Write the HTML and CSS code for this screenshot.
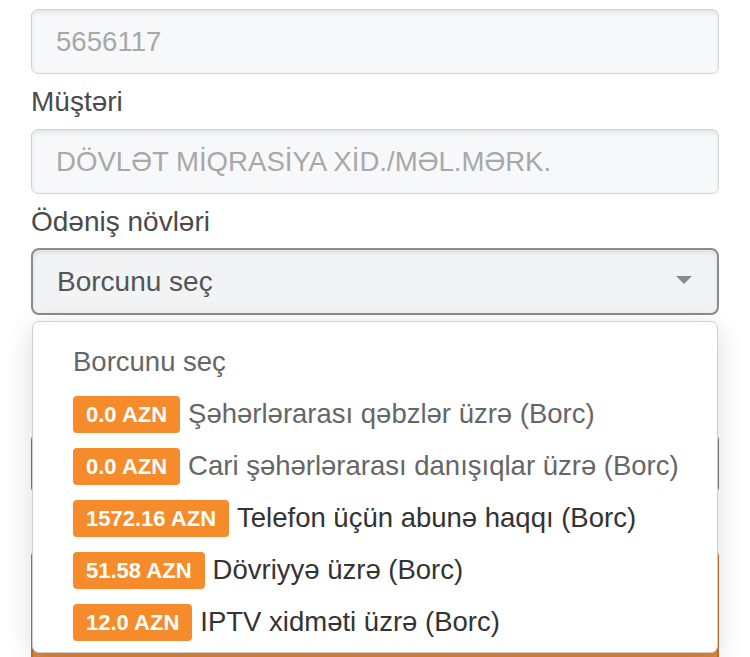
FILE: index.html
```html
<!DOCTYPE html>
<html lang="az">
<head>
<meta charset="UTF-8">
<meta name="viewport" content="width=device-width, initial-scale=1.0">
<title>Mobil ödəniş</title>
<link rel="stylesheet" href="styles.css">
</head>
<body>

<form class="pay-form">
    <input class="field" type="text" value="5656117" readonly>

    <label class="label">Müştəri</label>
    <input class="field" type="text" value="DÖVLƏT MİQRASİYA XİD./MƏL.MƏRK." readonly>

    <label class="label label-select">Ödəniş növləri</label>
    <div class="select-wrap">
        <div class="select">
            <span>Borcunu seç</span>
            <span class="caret"></span>
        </div>

        <ul class="dropdown">
            <li class="option placeholder">Borcunu seç</li>
            <li class="option muted"><span class="badge">0.0 AZN</span>Şəhərlərarası qəbzlər üzrə (Borc)</li>
            <li class="option muted"><span class="badge">0.0 AZN</span>Cari şəhərlərarası danışıqlar üzrə (Borc)</li>
            <li class="option"><span class="badge">1572.16 AZN</span>Telefon üçün abunə haqqı (Borc)</li>
            <li class="option"><span class="badge">51.58 AZN</span>Dövriyyə üzrə (Borc)</li>
            <li class="option"><span class="badge">12.0 AZN</span>IPTV xidməti üzrə (Borc)</li>
        </ul>
    </div>

    <label class="label label-amount">Məbləğ</label>
    <input class="field field-amount" type="text">

    <button class="pay-btn" type="button">MOBİL ÖDƏ</button>
</form>

</body>
</html>
```

FILE: styles.css
```css
body {
    margin: 0;
    background: #fff;
    font-family: 'Liberation Sans', Arial, sans-serif;
    color: #4a4a4a;
}

.pay-form {
    padding: 9px 31px 0;
}

.field {
    display: block;
    box-sizing: border-box;
    width: 100%;
    height: 65px;
    margin: 0;
    padding: 0 24px;
    border: 1px solid #d2d2d4;
    border-radius: 7px;
    background: #f7f8fa;
    box-shadow: inset 0 3px 4px rgba(0, 0, 0, 0.07);
    font-family: inherit;
    font-size: 27.6px;
    color: #a8a8a8;
    outline: none;
}

.label {
    display: block;
    height: 30px;
    line-height: 30px;
    margin: 13px 0 12px;
    font-size: 28px;
    color: #4a4a4a;
}

.label-select {
    margin-bottom: 11px;
}

.select-wrap {
    position: relative;
}

.select {
    box-sizing: border-box;
    height: 67px;
    padding: 0 25px 0 24px;
    display: flex;
    align-items: center;
    justify-content: space-between;
    border: 2px solid #8c8c8c;
    border-radius: 8px;
    background: #f2f3f5;
    box-shadow: inset 0 3px 5px rgba(0, 0, 0, 0.08);
    font-size: 28px;
    color: #555;
}

.caret {
    width: 0;
    height: 0;
    margin-top: -4px;
    border-left: 8px solid transparent;
    border-right: 8px solid transparent;
    border-top: 8px solid #8a8a8a;
}

.dropdown {
    position: absolute;
    top: 73px;
    left: 1px;
    right: 1px;
    z-index: 5;
    margin: 0;
    padding: 14px 0 4px 40px;
    list-style: none;
    background: #fff;
    border: 1px solid #cfcfcf;
    border-radius: 7px;
    box-shadow: 0 6px 28px rgba(0, 0, 0, 0.14);
}

.option {
    height: 52px;
    display: flex;
    align-items: center;
    font-size: 27.5px;
    color: #333;
    white-space: nowrap;
}

.option.placeholder,
.option.muted {
    color: #666;
}

.badge {
    display: inline-block;
    height: 37px;
    line-height: 37px;
    padding: 0 13px;
    margin-right: 8px;
    border-radius: 4px;
    background: #f68b2c;
    color: #fff;
    font-size: 22px;
    font-weight: 700;
}

.label-amount {
    margin: 71px 0 17px;
}

.field-amount {
    height: 61px;
    border: 2px solid #777;
    background: #f7f8fa;
}

.pay-btn {
    display: block;
    box-sizing: border-box;
    width: 100%;
    height: 170px;
    margin-top: 55px;
    padding: 96px 0 0;
    border: 2px solid #b9722f;
    border-radius: 7px;
    background: #e0873a;
    color: #fff;
    font-family: inherit;
    font-size: 40px;
    line-height: 46px;
    font-weight: 700;
    letter-spacing: 2px;
    vertical-align: top;
}
```
